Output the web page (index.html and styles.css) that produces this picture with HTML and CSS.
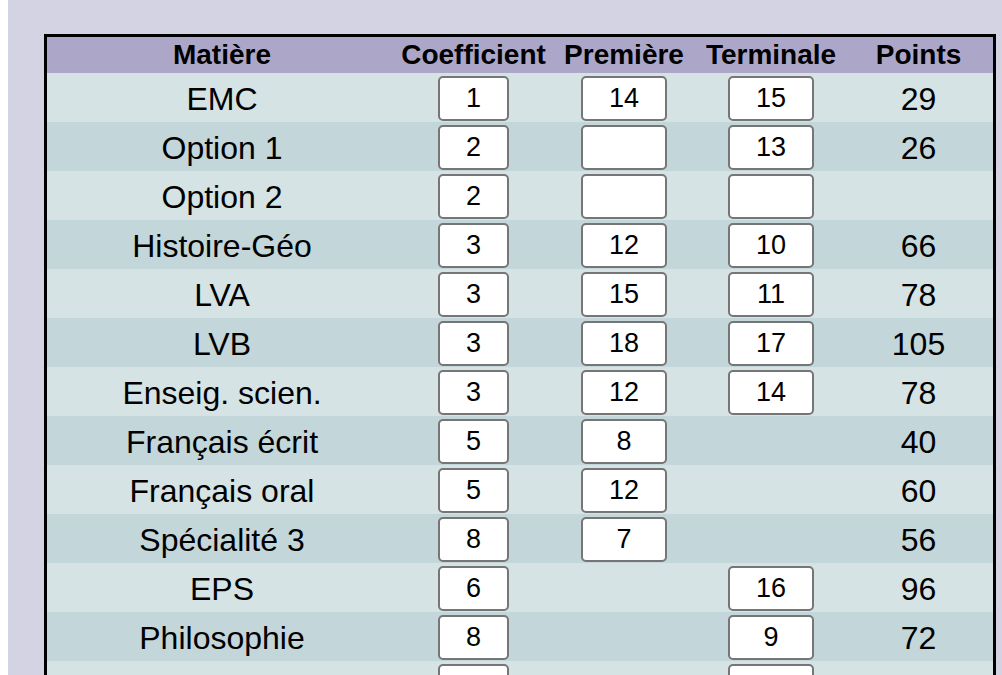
FILE: index.html
```html
<!DOCTYPE html>
<html lang="fr">
<head>
<meta charset="utf-8">
<title>Calcul des points</title>
<link rel="stylesheet" href="styles.css">
</head>
<body>
<div class="page">
  <table class="grades">
    <colgroup>
      <col class="c-subject">
      <col class="c-coef">
      <col class="c-first">
      <col class="c-final">
      <col class="c-points">
    </colgroup>
    <thead>
      <tr><th>Matière</th><th>Coefficient</th><th>Première</th><th>Terminale</th><th>Points</th></tr>
    </thead>
    <tbody>
      <tr><td>EMC</td><td><input class="in in-coef" value="1"></td><td><input class="in in-note" value="14"></td><td><input class="in in-note" value="15"></td><td>29</td></tr>
      <tr><td>Option 1</td><td><input class="in in-coef" value="2"></td><td><input class="in in-note" value=""></td><td><input class="in in-note" value="13"></td><td>26</td></tr>
      <tr><td>Option 2</td><td><input class="in in-coef" value="2"></td><td><input class="in in-note" value=""></td><td><input class="in in-note" value=""></td><td></td></tr>
      <tr><td>Histoire-Géo</td><td><input class="in in-coef" value="3"></td><td><input class="in in-note" value="12"></td><td><input class="in in-note" value="10"></td><td>66</td></tr>
      <tr><td>LVA</td><td><input class="in in-coef" value="3"></td><td><input class="in in-note" value="15"></td><td><input class="in in-note" value="11"></td><td>78</td></tr>
      <tr><td>LVB</td><td><input class="in in-coef" value="3"></td><td><input class="in in-note" value="18"></td><td><input class="in in-note" value="17"></td><td>105</td></tr>
      <tr><td>Enseig. scien.</td><td><input class="in in-coef" value="3"></td><td><input class="in in-note" value="12"></td><td><input class="in in-note" value="14"></td><td>78</td></tr>
      <tr><td>Français écrit</td><td><input class="in in-coef" value="5"></td><td><input class="in in-note" value="8"></td><td></td><td>40</td></tr>
      <tr><td>Français oral</td><td><input class="in in-coef" value="5"></td><td><input class="in in-note" value="12"></td><td></td><td>60</td></tr>
      <tr><td>Spécialité 3</td><td><input class="in in-coef" value="8"></td><td><input class="in in-note" value="7"></td><td></td><td>56</td></tr>
      <tr><td>EPS</td><td><input class="in in-coef" value="6"></td><td></td><td><input class="in in-note" value="16"></td><td>96</td></tr>
      <tr><td>Philosophie</td><td><input class="in in-coef" value="8"></td><td></td><td><input class="in in-note" value="9"></td><td>72</td></tr>
      <tr><td>Spécialité 4</td><td><input class="in in-coef" value="16"></td><td></td><td><input class="in in-note" value="10"></td><td>160</td></tr>
    </tbody>
  </table>
</div>
</body>
</html>
```

FILE: styles.css
```css
html, body {
  margin: 0;
  padding: 0;
  background: #ffffff;
}

body {
  padding-left: 8px;
  font-family: "Liberation Sans", Arial, sans-serif;
  color: #000;
}

.page {
  background: #d4d3e3;
  padding: 34px 6px 40px 36px;
  min-height: 700px;
}

.grades {
  border: 3px solid #000;
  border-collapse: separate;
  border-spacing: 0;
  table-layout: fixed;
  width: 952px;
}

.c-subject { width: 350px; }
.c-coef { width: 153px; }
.c-first { width: 148px; }
.c-final { width: 146px; }
.c-points { width: 149px; }

.grades th {
  background: #aca7c8;
  font-size: 28px;
  font-weight: bold;
  line-height: 36px;
  height: 36px;
  padding: 0;
  text-align: center;
  white-space: nowrap;
}

.grades td {
  font-size: 32px;
  line-height: 46px;
  padding: 3px 0 0 0;
  text-align: center;
  vertical-align: top;
  white-space: nowrap;
}

.grades tbody tr:nth-child(odd) td {
  background: #d5e3e4;
}

.grades tbody tr:nth-child(even) td {
  background: #c3d6d9;
}

.in {
  display: block;
  margin: 0 auto;
  box-sizing: border-box;
  height: 45px;
  border: 2px solid #767676;
  border-radius: 5px;
  background: #fff;
  font-family: "Liberation Sans", Arial, sans-serif;
  font-size: 27px;
  color: #000;
  text-align: center;
  padding: 0;
}

.in-coef { width: 71px; }
.in-note { width: 86px; }
```
